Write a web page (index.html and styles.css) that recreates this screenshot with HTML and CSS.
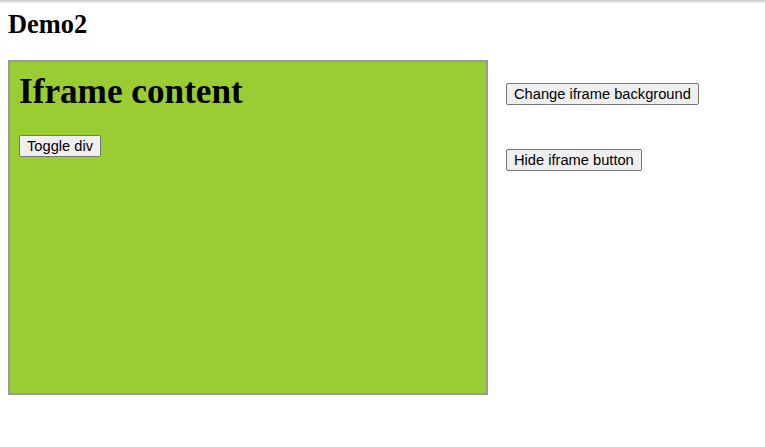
FILE: index.html
```html
<!DOCTYPE html>
<html lang="en">
<head>
<meta charset="utf-8">
<title>Demo2</title>
<link rel="stylesheet" href="styles.css">
</head>
<body>
<div class="top-shadow"></div>
<h2 class="title">Demo2</h2>
<div class="row">
  <div class="frame">
    <div class="frame-body">
      <h1 class="frame-title">Iframe content</h1>
      <button class="btn">Toggle div</button>
    </div>
  </div>
  <div class="controls">
    <button class="btn">Change iframe background</button>
    <button class="btn">Hide iframe button</button>
  </div>
</div>
</body>
</html>
```

FILE: styles.css
```css
html, body {
  margin: 0;
  padding: 0;
  background: #ffffff;
}
body {
  padding: 8px 8px 0 8px;
  font-family: "Liberation Serif", "Times New Roman", serif;
  color: #000;
}
.top-shadow {
  position: fixed;
  left: 0;
  top: 0;
  right: 0;
  height: 4px;
  background: linear-gradient(to bottom, #c8c8c8, #e6e6e6 50%, rgba(255,255,255,0));
}
.title {
  margin: 0;
  height: 30px;
  font-size: 26.4px;
  line-height: 30px;
  font-weight: bold;
  padding-top: 1px;
  margin-bottom: 22px;
  box-sizing: border-box;
}
.row {
  display: flex;
  align-items: flex-start;
  gap: 18px;
}
.frame {
  width: 480px;
  height: 335px;
  box-sizing: border-box;
  border: 2px solid #999999;
  background: #9acd32;
}
.frame-body {
  padding: 9px 9px;
}
.frame-title {
  margin: 0 0 23px 0;
  font-size: 35.2px;
  line-height: 41px;
  font-weight: bold;
}
.controls {
  display: flex;
  flex-direction: column;
  align-items: flex-start;
  padding-top: 23px;
  gap: 44px;
}
.btn {
  font-family: Arial, "Liberation Sans", sans-serif;
  font-size: 14.67px;
  height: 22px;
  line-height: 18px;
  box-sizing: border-box;
  padding: 1px 7px;
  border: 1px solid #767676;
  border-radius: 2px;
  background: #efefef;
  color: #000;
  margin: 0;
}
```
